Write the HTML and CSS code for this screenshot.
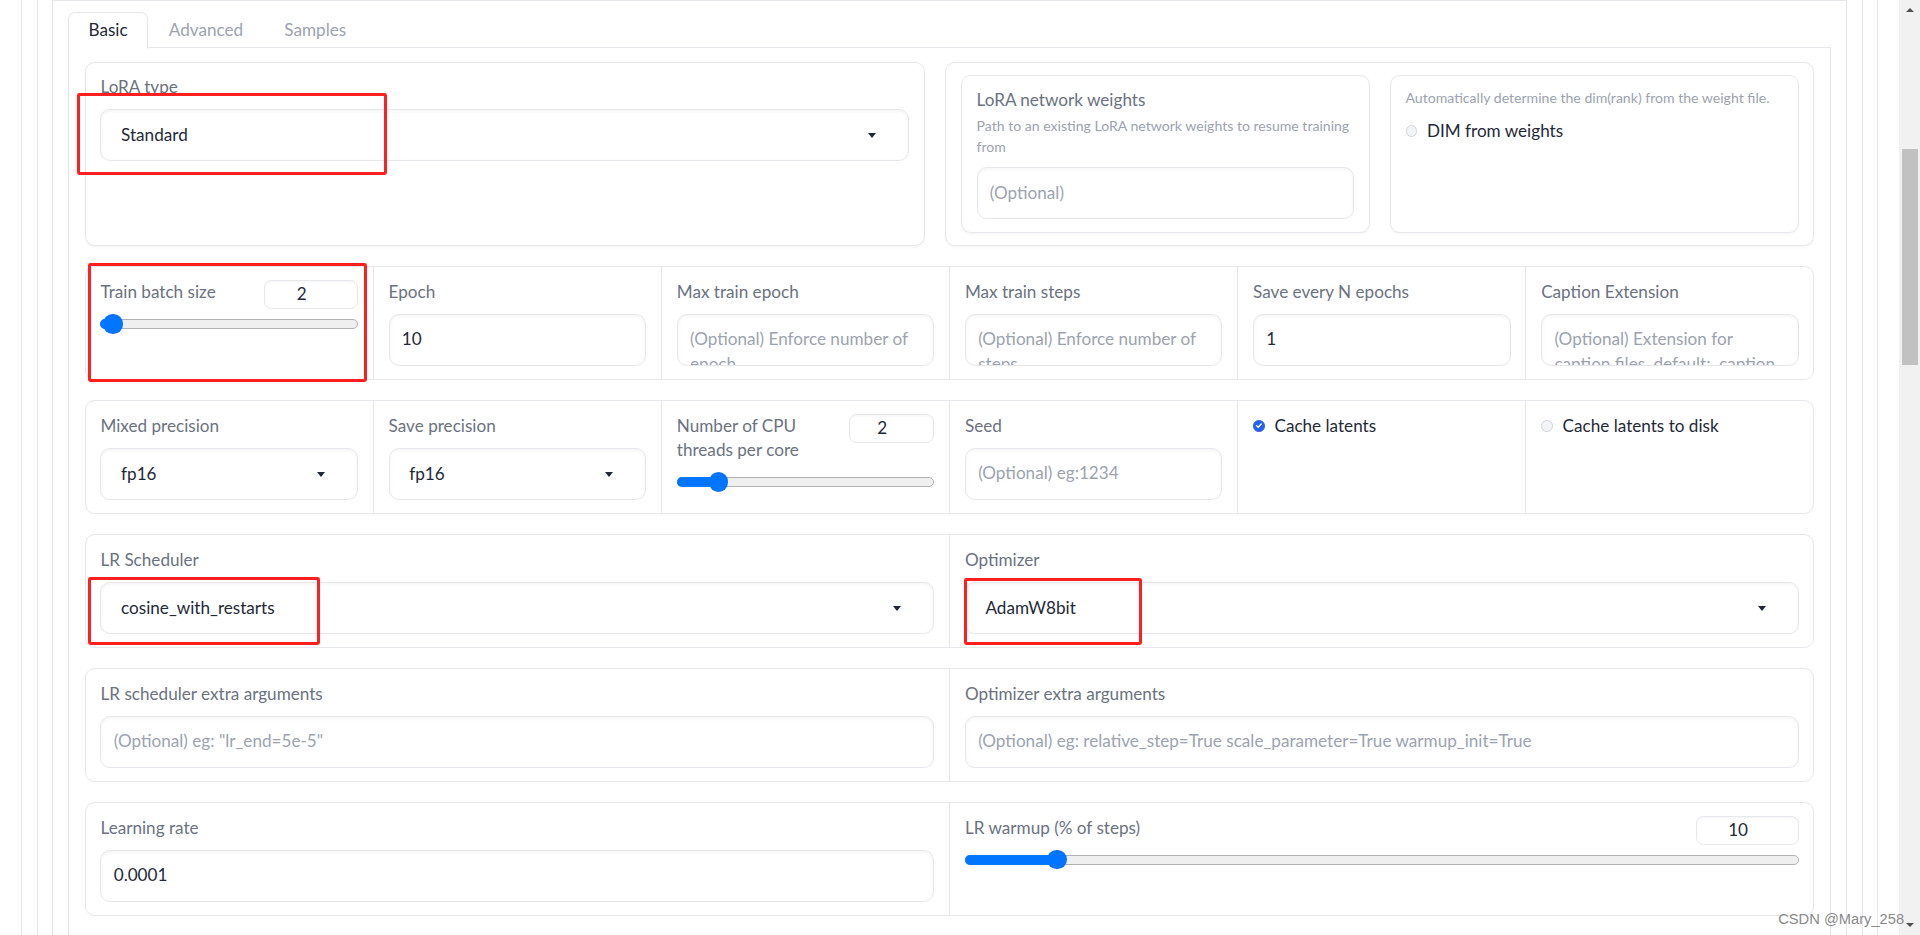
FILE: index.html
```html
<!DOCTYPE html>
<html>
<head>
<meta charset="utf-8">
<title>LoRA training</title>
<link rel="stylesheet" href="styles.css">
</head>
<body>
<div class="page">
  <div class="viewport">
    <div class="shell1"><div class="shell2"><div class="shell3">
      <div class="tab-nav">
        <button class="tab selected">Basic</button>
        <button class="tab">Advanced</button>
        <button class="tab">Samples</button>
      </div>
      <div class="tab-panel">
        <div class="row1">
          <div class="block">
            <div class="head"><span class="label">LoRA type</span></div>
            <div class="input dropdown"><span>Standard</span><span class="caret"></span></div>
          </div>
          <div class="block group">
            <div class="block">
              <div class="head">
                <span class="label">LoRA network weights</span>
                <span class="info">Path to an existing LoRA network weights to resume training from</span>
              </div>
              <div class="input ph">(Optional)</div>
            </div>
            <div class="block">
              <div class="head"><span class="info solo">Automatically determine the dim(rank) from the weight file.</span></div>
              <div class="check"><span class="box"></span><span>DIM from weights</span></div>
            </div>
          </div>
        </div>

        <div class="form cols6">
          <div class="cell">
            <div class="slider-head"><span class="label">Train batch size</span><span class="num">2</span></div>
            <div class="range"><div class="track"></div><div class="fill" style="width:10px"></div><div class="thumb" style="left:10px"></div></div>
          </div>
          <div class="cell">
            <div class="head"><span class="label">Epoch</span></div>
            <div class="input">10</div>
          </div>
          <div class="cell">
            <div class="head"><span class="label">Max train epoch</span></div>
            <div class="input ph">(Optional) Enforce number of epoch</div>
          </div>
          <div class="cell">
            <div class="head"><span class="label">Max train steps</span></div>
            <div class="input ph">(Optional) Enforce number of steps</div>
          </div>
          <div class="cell">
            <div class="head"><span class="label">Save every N epochs</span></div>
            <div class="input">1</div>
          </div>
          <div class="cell">
            <div class="head"><span class="label">Caption Extension</span></div>
            <div class="input ph">(Optional) Extension for caption files. default: .caption</div>
          </div>
        </div>

        <div class="form cols6">
          <div class="cell">
            <div class="head"><span class="label">Mixed precision</span></div>
            <div class="input dropdown"><span>fp16</span><span class="caret"></span></div>
          </div>
          <div class="cell">
            <div class="head"><span class="label">Save precision</span></div>
            <div class="input dropdown"><span>fp16</span><span class="caret"></span></div>
          </div>
          <div class="cell">
            <div class="slider-head"><span class="label">Number of CPU threads per core</span><span class="num w70">2</span></div>
            <div class="range"><div class="track"></div><div class="fill" style="width:34px"></div><div class="thumb" style="left:34px"></div></div>
          </div>
          <div class="cell">
            <div class="head"><span class="label">Seed</span></div>
            <div class="input ph">(Optional) eg:1234</div>
          </div>
          <div class="cell">
            <div class="check"><span class="box on"><svg viewBox="0 0 10 10" width="9" height="9"><path d="M2.6 5.1 L4.3 6.8 L7.5 3.4" fill="none" stroke="#fff" stroke-width="1.4" stroke-linecap="round" stroke-linejoin="round"/></svg></span><span>Cache latents</span></div>
          </div>
          <div class="cell">
            <div class="check"><span class="box"></span><span>Cache latents to disk</span></div>
          </div>
        </div>

        <div class="form cols2">
          <div class="cell">
            <div class="head"><span class="label">LR Scheduler</span></div>
            <div class="input dropdown"><span>cosine_with_restarts</span><span class="caret"></span></div>
          </div>
          <div class="cell">
            <div class="head"><span class="label">Optimizer</span></div>
            <div class="input dropdown"><span>AdamW8bit</span><span class="caret"></span></div>
          </div>
        </div>

        <div class="form cols2">
          <div class="cell">
            <div class="head"><span class="label">LR scheduler extra arguments</span></div>
            <div class="input ph">(Optional) eg: "lr_end=5e-5"</div>
          </div>
          <div class="cell">
            <div class="head"><span class="label">Optimizer extra arguments</span></div>
            <div class="input ph">(Optional) eg: relative_step=True scale_parameter=True warmup_init=True</div>
          </div>
        </div>

        <div class="form cols2">
          <div class="cell">
            <div class="head"><span class="label">Learning rate</span></div>
            <div class="input">0.0001</div>
          </div>
          <div class="cell">
            <div class="slider-head"><span class="label">LR warmup (% of steps)</span><span class="num w84">10</span></div>
            <div class="range"><div class="track"></div><div class="fill" style="width:75px"></div><div class="thumb" style="left:75px"></div></div>
          </div>
        </div>

        <div class="form cols2">
          <div class="cell tall"></div>
          <div class="cell tall"></div>
        </div>
      </div>
    </div></div></div>
  </div>
  <div class="scrollbar">
    <div class="sb-btn"><span class="sb-up"></span></div>
    <div class="sb-track"><div class="sb-thumb"></div></div>
    <div class="sb-btn"><span class="sb-down"></span></div>
  </div>
  <div class="mark m-lora"></div>
  <div class="mark m-batch"></div>
  <div class="mark m-sched"></div>
  <div class="mark m-optim"></div>
  <div class="watermark">CSDN @Mary_258</div>
</div>
</body>
</html>
```

FILE: styles.css
```css
html, body {
  margin: 0;
  padding: 0;
  background: #fff;
  overflow: hidden;
}

.page {
  zoom: 1.2245;
  width: 1568px;
  height: 764px;
  display: flex;
  position: relative;
  overflow: hidden;
  font-family: Lato, "Noto Sans", sans-serif;
  font-size: 14px;
  color: #1f2937;
}

.viewport {
  flex: 1;
  height: 764px;
  overflow: hidden;
}

.shell1 {
  margin: 0 17px;
  padding: 0 12px;
  border-left: 1px solid #e5e7eb;
  border-right: 1px solid #e5e7eb;
}

.shell2 {
  padding: 0 12px;
  border-left: 1px solid #e5e7eb;
  border-right: 1px solid #e5e7eb;
}

.shell3 {
  padding: 9px 12px 0;
  border: 1px solid #e5e7eb;
  border-bottom: none;
}

/* tabs */
.tab-nav {
  display: flex;
  align-items: flex-start;
  border-bottom: 1px solid #e5e7eb;
}

.tab {
  font-family: inherit;
  font-size: 14px;
  line-height: 20px;
  padding: 4px 16px;
  margin: 0;
  border: 1px solid transparent;
  border-bottom: none;
  background: none;
  color: #9ca3af;
  cursor: pointer;
}

.tab.selected {
  color: #1f2937;
  background: #fff;
  border-color: #e5e7eb;
  border-radius: 6px 6px 0 0;
  padding-bottom: 5px;
  margin-bottom: -1px;
}

.tab-panel {
  border: 1px solid #e5e7eb;
  border-top: none;
  padding: 11px 13px 30px;
  display: flex;
  flex-direction: column;
  gap: 16.4px;
}

/* blocks */
.row1 {
  display: grid;
  grid-template-columns: 686fr 710fr;
  gap: 16.8px;
}

.block {
  border: 1px solid #e5e7eb;
  border-radius: 8px;
  padding: 10px 12px;
  background: #fff;
  box-shadow: 0 1px 2px rgba(0, 0, 0, 0.03);
  min-width: 0;
}

.group {
  display: grid;
  grid-template-columns: 1fr 1fr;
  gap: 16.4px;
}

.head {
  margin-bottom: 8px;
}

.label {
  display: block;
  line-height: 20px;
  color: #6b7280;
}

.info {
  display: block;
  font-size: 11.5px;
  line-height: 16.8px;
  color: #9ca3af;
  margin-top: 3px;
}

.info.solo {
  margin-top: 0;
}

.input {
  height: 42.6px;
  box-sizing: border-box;
  border: 1px solid #e5e7eb;
  border-radius: 8px;
  padding: 10px;
  line-height: 20px;
  background: #fff;
  box-shadow: inset 0 1px 3px rgba(0, 0, 0, 0.05);
  overflow: hidden;
  color: #1f2937;
}

.ph {
  color: #9ca3af;
}

.dropdown {
  display: flex;
  align-items: center;
  justify-content: space-between;
  padding: 0 26px 0 16px;
}

.caret {
  width: 0;
  height: 0;
  border-left: 4px solid transparent;
  border-right: 4px solid transparent;
  border-top: 4.5px solid #1f2937;
}

/* forms */
.form {
  display: grid;
  gap: 1px;
  background: #e5e7eb;
  border: 1px solid #e5e7eb;
  border-radius: 8px;
  overflow: hidden;
}

.cols6 {
  grid-template-columns: repeat(6, 1fr);
}

.cols2 {
  grid-template-columns: repeat(2, 1fr);
}

.cell {
  background: #fff;
  padding: 10.4px 12px 10.4px;
  min-width: 0;
}

.cell.tall {
  height: 80px;
}

/* sliders */
.slider-head {
  display: flex;
  justify-content: space-between;
  align-items: flex-start;
  gap: 8px;
}

.num {
  flex: none;
  width: 77px;
  height: 23.5px;
  box-sizing: border-box;
  border: 1px solid #e5e7eb;
  border-radius: 6px;
  padding-right: 15px;
  text-align: center;
  line-height: 21.5px;
  color: #1f2937;
  margin-top: 0.4px;
  margin-bottom: -4px;
  box-shadow: inset 0 1px 2px rgba(0, 0, 0, 0.04);
}

.num.w70 {
  width: 70px;
}

.num.w84 {
  width: 84px;
}

.range {
  position: relative;
  height: 16px;
  margin-top: 8px;
}

.track {
  position: absolute;
  left: 0;
  right: 0;
  top: 4px;
  height: 8px;
  box-sizing: border-box;
  border: 1px solid #b2b2b2;
  border-radius: 4px;
  background: #efefef;
}

.fill {
  position: absolute;
  left: 0;
  top: 4px;
  height: 8px;
  background: #0075ff;
  border-radius: 4px 0 0 4px;
}

.thumb {
  position: absolute;
  top: 0;
  width: 16px;
  height: 16px;
  margin-left: -8px;
  border-radius: 50%;
  background: #0075ff;
}

/* checkbox */
.check {
  display: flex;
  align-items: center;
  gap: 8px;
  line-height: 20px;
  color: #1f2937;
}

.box {
  flex: none;
  width: 9.5px;
  height: 9.5px;
  box-sizing: border-box;
  border-radius: 50%;
  border: 1px solid #d1d5db;
  background: #f3f4f6;
  display: flex;
  align-items: center;
  justify-content: center;
}

.box.on {
  background: #2563eb;
  border-color: #2563eb;
}

.box svg {
  display: block;
}

/* scrollbar */
.scrollbar {
  width: 17px;
  flex: none;
  height: 764px;
  background: #f1f1f1;
  display: flex;
  flex-direction: column;
}

.sb-btn {
  height: 17px;
  flex: none;
  display: flex;
  align-items: center;
  justify-content: center;
}

.sb-up {
  width: 0;
  height: 0;
  border-left: 3.5px solid transparent;
  border-right: 3.5px solid transparent;
  border-bottom: 4px solid #505050;
}

.sb-down {
  width: 0;
  height: 0;
  border-left: 3.5px solid transparent;
  border-right: 3.5px solid transparent;
  border-top: 4px solid #505050;
}

.sb-track {
  flex: 1;
  padding: 0 2px;
}

.sb-thumb {
  margin-top: 105px;
  height: 176px;
  background: #c1c1c1;
}

/* annotation rectangles drawn over the screenshot */
.mark {
  position: absolute;
  box-sizing: border-box;
  border: 2.8px solid #ff1f1f;
  border-radius: 2px;
  pointer-events: none;
}

.m-lora {
  left: 63px;
  top: 76px;
  width: 253px;
  height: 67px;
}

.m-batch {
  left: 72px;
  top: 215px;
  width: 228px;
  height: 97px;
}

.m-sched {
  left: 72px;
  top: 471px;
  width: 189px;
  height: 56px;
}

.m-optim {
  left: 787px;
  top: 472px;
  width: 146px;
  height: 55px;
}

.watermark {
  position: absolute;
  right: 13px;
  bottom: 6px;
  font-family: "Liberation Sans", Arial, sans-serif;
  font-size: 12px;
  line-height: 14px;
  color: #8a8a8a;
}
```
